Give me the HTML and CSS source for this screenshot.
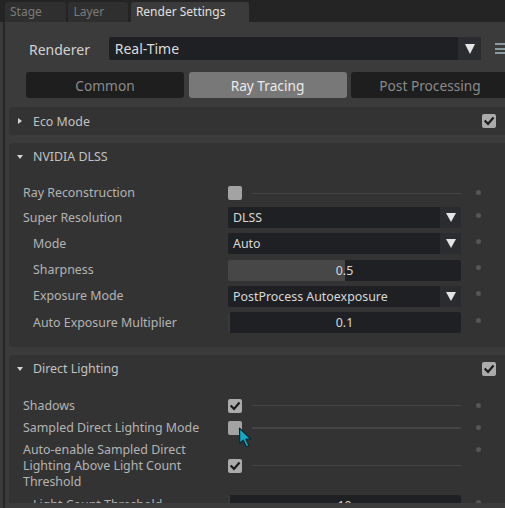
FILE: index.html
```html
<!DOCTYPE html>
<html>
<head>
<meta charset="utf-8">
<link rel="stylesheet" href="styles.css">
</head>
<body>
<div class="app">
  <div class="tabbar">
    <div class="tab">Stage</div>
    <div class="tab">Layer</div>
    <div class="tab active">Render Settings</div>
  </div>
  <div class="main">
    <div class="panel">
      <div class="renderer-row">
        <span class="renderer-label">Renderer</span>
        <div class="combo big"><span class="combo-text">Real-Time</span><span class="combo-arrow"><i class="tri"></i></span></div>
        <div class="menu-icon"><span></span><span></span><span></span></div>
      </div>
      <div class="modes">
        <div class="mode">Common</div>
        <div class="mode active">Ray Tracing</div>
        <div class="mode">Post Processing</div>
      </div>

      <section class="frame">
        <div class="frame-head">
          <span class="caret-cell"><i class="caret right"></i></span>
          <span class="frame-title">Eco Mode</span>
          <span class="check on"><svg viewBox="0 0 14 14"><path d="M3.4 7.3 L6 9.9 L10.8 4.3"/></svg></span>
        </div>
      </section>

      <section class="frame">
        <div class="frame-head">
          <span class="caret-cell"><i class="caret down"></i></span>
          <span class="frame-title">NVIDIA DLSS</span>
        </div>
        <div class="frame-body">
          <div class="row chk">
            <span class="label">Ray Reconstruction</span>
            <div class="checkline"><span class="check"></span><span class="rule"></span></div>
            <span class="dot"></span>
          </div>
          <div class="row ctl">
            <span class="label">Super Resolution</span>
            <div class="combo"><span class="combo-text">DLSS</span><span class="combo-arrow"><i class="tri"></i></span></div>
            <span class="dot"></span>
          </div>
          <div class="row ctl indent">
            <span class="label">Mode</span>
            <div class="combo"><span class="combo-text">Auto</span><span class="combo-arrow"><i class="tri"></i></span></div>
            <span class="dot"></span>
          </div>
          <div class="row ctl indent">
            <span class="label">Sharpness</span>
            <div class="slider"><span class="fill" style="width:50%"></span><span class="value">0.5</span></div>
            <span class="dot"></span>
          </div>
          <div class="row ctl indent">
            <span class="label">Exposure Mode</span>
            <div class="combo"><span class="combo-text">PostProcess Autoexposure</span><span class="combo-arrow"><i class="tri"></i></span></div>
            <span class="dot"></span>
          </div>
          <div class="row ctl indent">
            <span class="label">Auto Exposure Multiplier</span>
            <div class="slider"><span class="fill dim" style="width:1%"></span><span class="value">0.1</span></div>
            <span class="dot"></span>
          </div>
        </div>
      </section>

      <section class="frame">
        <div class="frame-head">
          <span class="caret-cell"><i class="caret down"></i></span>
          <span class="frame-title">Direct Lighting</span>
          <span class="check on"><svg viewBox="0 0 14 14"><path d="M3.4 7.3 L6 9.9 L10.8 4.3"/></svg></span>
        </div>
        <div class="frame-body">
          <div class="row chk">
            <span class="label">Shadows</span>
            <div class="checkline"><span class="check on"><svg viewBox="0 0 14 14"><path d="M3.4 7.3 L6 9.9 L10.8 4.3"/></svg></span><span class="rule"></span></div>
            <span class="dot"></span>
          </div>
          <div class="row chk">
            <span class="label">Sampled Direct Lighting Mode</span>
            <div class="checkline"><span class="check"></span><span class="rule"></span></div>
            <span class="dot"></span>
          </div>
          <div class="row chk">
            <span class="label">Auto-enable Sampled Direct Lighting Above Light Count Threshold</span>
            <div class="checkline"><span class="check on"><svg viewBox="0 0 14 14"><path d="M3.4 7.3 L6 9.9 L10.8 4.3"/></svg></span><span class="rule"></span></div>
            <span class="dot"></span>
          </div>
          <div class="row ctl indent">
            <span class="label">Light Count Threshold</span>
            <div class="slider"><span class="fill dim" style="width:1%"></span><span class="value">10</span></div>
            <span class="dot"></span>
          </div>
        </div>
      </section>
    </div>
    <div class="footer"></div>
  </div>
  <svg class="cursor" viewBox="0 0 16 22" width="16" height="22">
    <path d="M1.5 1.2 L1.8 16.5 L5.3 13.2 L8.2 19.8 L10.8 18.7 L7.9 12.2 L12.8 12.0 Z"/>
  </svg>
</div>
</body>
</html>
```

FILE: styles.css
```css
* { box-sizing: border-box; }

body {
  margin: 0;
  background: #3b3b3b;
  font-family: "Noto Sans", "Open Sans", sans-serif;
}

.app {
  width: 505px;
  height: 508px;
  display: flex;
  flex-direction: column;
  overflow: hidden;
  position: relative;
}

/* top tab bar */
.tabbar {
  flex: none;
  height: 22px;
  background: #242424;
  display: flex;
  align-items: flex-end;
  gap: 2.6px;
  padding-left: 5px;
}

.tab {
  height: 20px;
  padding: 0 24px 0 5px;
  background: #2f2f2f;
  color: #7b7b7b;
  font-size: 12px;
  line-height: 20px;
  border-radius: 3px 3px 0 0;
  white-space: nowrap;
}

.tab.active {
  background: #3b3b3b;
  color: #e0e0e0;
}

/* main area */
.main {
  flex: 1;
  min-height: 0;
  display: flex;
  flex-direction: column;
  margin-left: 3px;
  border-left: 2px solid #272727;
}

.panel {
  flex: 1;
  min-height: 0;
  overflow: hidden;
  padding-left: 4px;
}

.footer {
  flex: none;
  height: 5px;
  background: #3c3c3c;
}

/* renderer row */
.renderer-row {
  display: flex;
  align-items: center;
  height: 23px;
  margin-top: 15px;
}

.renderer-label {
  flex: none;
  width: 99.7px;
  padding-left: 20px;
  padding-top: 1px;
  color: #d2d2d2;
  font-size: 14px;
}

.combo {
  flex: none;
  width: 233px;
  height: 21px;
  display: flex;
  background: #1f2023;
  border-radius: 2px;
  overflow: hidden;
}

.combo.big {
  width: 372.3px;
  height: 23px;
}

.combo-text {
  flex: 1;
  padding-left: 5px;
  color: #d8d8d8;
  font-size: 12.4px;
  line-height: 21px;
  white-space: nowrap;
}

.combo.big .combo-text {
  font-size: 14px;
  line-height: 24px;
  padding-left: 6px;
  color: #dcdcdc;
}

.combo-arrow {
  flex: none;
  width: 21px;
  background: #2b2c2f;
  display: flex;
  align-items: center;
  justify-content: center;
}

.combo.big .combo-arrow {
  width: 22.7px;
}

.tri {
  display: block;
  width: 0;
  height: 0;
  border-left: 5.6px solid transparent;
  border-right: 5.6px solid transparent;
  border-top: 9px solid #e4e4e4;
}

.combo.big .tri {
  border-top-width: 10px;
}

.menu-icon {
  flex: none;
  margin-left: 14px;
  width: 12px;
  display: flex;
  flex-direction: column;
  gap: 2.7px;
}

.menu-icon span {
  display: block;
  height: 2px;
  background: #8c9aa1;
}

/* mode buttons */
.modes {
  display: flex;
  gap: 4.5px;
  margin-top: 12px;
  padding-left: 17px;
}

.mode {
  flex: none;
  width: 158px;
  height: 26px;
  border-radius: 3px;
  background: #1e1e1e;
  color: #8a8a8a;
  font-size: 13.7px;
  line-height: 27px;
  text-align: center;
}

.mode.active {
  background: #787878;
  color: #eaeaea;
}

/* collapsible frames */
.frame {
  width: 505px;
  background: #333333;
  border-radius: 4px;
  margin-top: 7.5px;
}

.modes + .frame {
  margin-top: 9px;
}

.frame-head {
  display: grid;
  grid-template-columns: 24px 449px 14px;
  align-items: center;
  height: 28px;
}

.caret-cell {
  display: flex;
  align-items: center;
  padding-left: 8px;
}

.caret {
  display: block;
  width: 0;
  height: 0;
}

.caret.right {
  border-top: 3.5px solid transparent;
  border-bottom: 3.5px solid transparent;
  border-left: 4.5px solid #d4d4d4;
  margin-left: 1px;
}

.caret.down {
  border-left: 3.5px solid transparent;
  border-right: 3.5px solid transparent;
  border-top: 4.5px solid #d4d4d4;
}

.frame-title {
  color: #c2c2c2;
  font-size: 12.4px;
}

.frame-body {
  display: flex;
  flex-direction: column;
  gap: 5.3px;
  padding: 14.3px 0 14px;
}

.row {
  display: flex;
  align-items: center;
  padding-left: 14px;
}

.row.ctl { min-height: 21px; }
.row.chk { min-height: 17px; }

.label {
  flex: none;
  width: 205px;
  padding-right: 8px;
  color: #b4b4b4;
  font-size: 12.4px;
  line-height: 16px;
}

.row.indent .label {
  padding-left: 10px;
}

.dot {
  flex: none;
  align-self: flex-start;
  width: 5px;
  height: 5px;
  margin-top: 5.5px;
  margin-left: 15px;
  border-radius: 50%;
  background: #565656;
}

/* checkbox */
.check {
  display: block;
  width: 14px;
  height: 14px;
  border-radius: 2px;
  background: #a3a3a3;
}

.check.on {
  background: #ababab;
}

.check svg {
  display: block;
  width: 14px;
  height: 14px;
}

.check path {
  fill: none;
  stroke: #1c1c1c;
  stroke-width: 2.2;
  stroke-linecap: square;
}

.checkline {
  flex: none;
  width: 233px;
  display: flex;
  align-items: center;
}

.rule {
  flex: 1;
  height: 1.5px;
  margin-left: 10px;
  background: #454545;
}

/* slider / number field */
.slider {
  flex: none;
  width: 233px;
  height: 21px;
  display: grid;
  background: #1f2023;
  border-radius: 2px;
  overflow: hidden;
}

.slider > * {
  grid-area: 1 / 1;
}

.fill {
  justify-self: start;
  height: 100%;
  background: #474747;
}

.fill.dim {
  background: #3a3a3a;
}

.value {
  justify-self: center;
  color: #dadada;
  font-size: 12.4px;
  line-height: 21px;
}

/* mouse pointer overlay */
.cursor {
  position: absolute;
  left: 238px;
  top: 427px;
}

.cursor path {
  fill: #19a7c4;
  stroke: #0b2a31;
  stroke-width: 1.2;
  stroke-linejoin: round;
}
```
